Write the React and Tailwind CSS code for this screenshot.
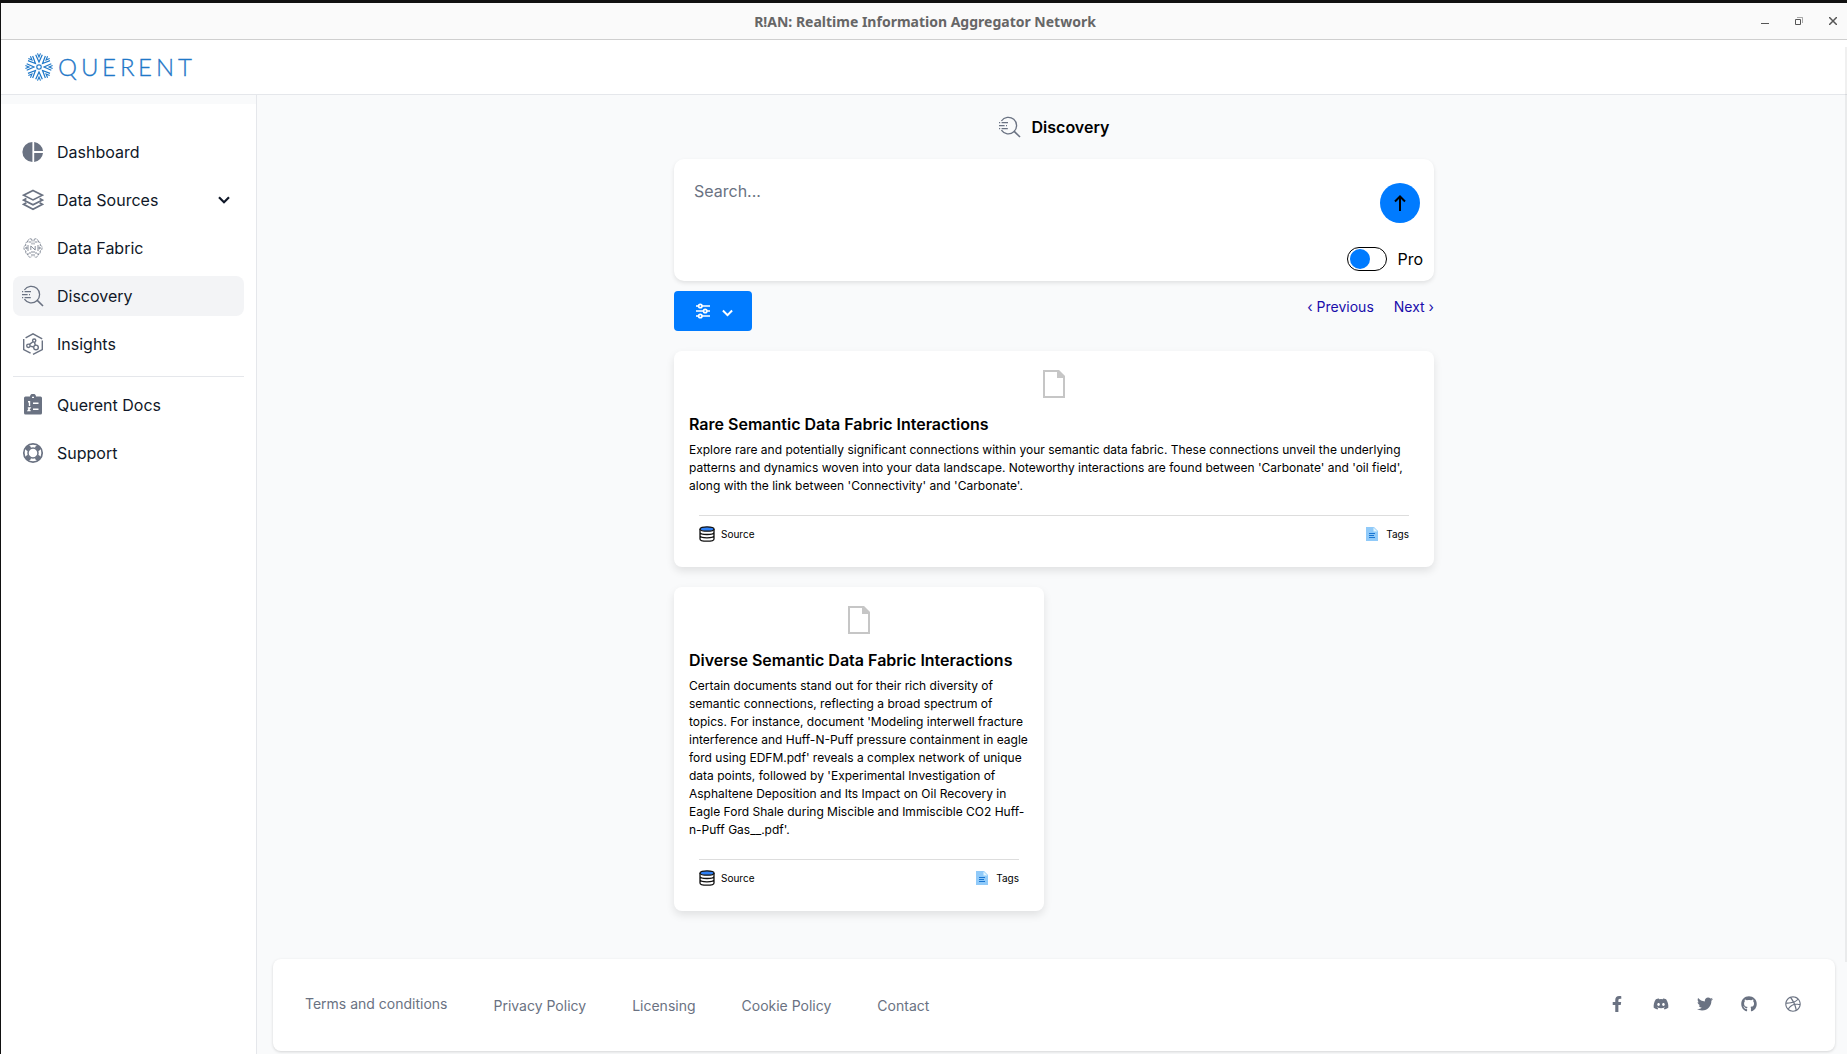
import React from "react";
import { FaFacebookF, FaDiscord, FaTwitter, FaGithub, FaDribbble } from "react-icons/fa";

function DiscoveryIcon() {
  return (
    <svg viewBox="0 0 22 22" className="size-[22px] shrink-0 text-gray-500" fill="none" stroke="currentColor" strokeWidth="1.3">
      <path d="M2.4 5A8.300 8.300 0 1 1 2.400 14.200" />
      <path d="M15 15.200 21 21" strokeWidth="1.600" />
      <path d="M0 6.600h1.200M2.600 6.600h6.400M0 9.600h5.600M7 9.600h1M0 12.600h1.200M2.600 12.600h6.200" />
    </svg>
  );
}

function DashboardIcon() {
  return (
    <svg viewBox="0 0 22 22" className="size-[22px] shrink-0 text-gray-500" fill="currentColor">
      <path d="M10.400 1a10 10 0 0 0 0 20zM12.200 1v8.900h8.800A10 10 0 0 0 12.200 1zM12.200 12v9a10 10 0 0 0 8.800-9z" />
    </svg>
  );
}

function LayersIcon() {
  return (
    <svg viewBox="0 0 22 22" className="size-[22px] shrink-0 text-gray-500" fill="none" stroke="currentColor" strokeWidth="1.700">
      <path d="M11 1.500 20.400 6.200 11 10.900 1.600 6.200z" />
      <path d="M4.400 9.400 1.600 11 11 15.700 20.400 11l-2.800-1.600" />
      <path d="M4.400 13.700 1.600 15.300 11 20.200l9.400-4.900-2.800-1.600" />
    </svg>
  );
}

function FabricIcon() {
  return (
    <svg viewBox="0 0 22 22" className="size-[22px] shrink-0 text-gray-500" fill="none" stroke="currentColor" strokeWidth="0.800">
      <path strokeDasharray="2.500 .8" d="M10 2.500a2.400 2.400 0 0 0-4 1v2.200M6 4.500a2.500 2.500 0 0 0-2 3.800M4 8a2.600 2.600 0 0 0-2 3.100A2.600 2.600 0 0 0 4 14M4 14a2.500 2.500 0 0 0 2 3.600M6 16v2.400a2.300 2.300 0 0 0 4 1M12 2.500a2.400 2.400 0 0 1 4 1v2.200M16 4.500a2.500 2.500 0 0 1 2 3.800M18 8a2.600 2.600 0 0 1 2 3.100 2.600 2.600 0 0 1-2 2.900M18 14a2.500 2.500 0 0 1-2 3.600M16 16v2.400a2.300 2.300 0 0 1-4 1" />
      <path d="M10 2.500v5M12 2.500v5M10 14v5.400M12 14v5.400M8 4v3M14 4v3M8 15v3M14 15v3" strokeDasharray="2 1" />
      <path d="M8.800 13V9l4.400 4V9M6 8v6M16 8v6" />
      <circle cx="4.400" cy="11" r=".8" /><circle cx="17.600" cy="11" r=".8" />
    </svg>
  );
}

function InsightsIcon() {
  return (
    <svg viewBox="0 0 22 22" className="size-[22px] shrink-0 text-gray-500" fill="none" stroke="currentColor" strokeWidth="1.400">
      <path d="M3.600 4.900 11 .8l9.200 5M20.300 7.600v9L11 21.400M8.600 20.200 1.700 16.600V6" />
      <circle cx="12.200" cy="7.600" r="1.600" /><circle cx="6.400" cy="12.800" r="1.700" /><circle cx="14" cy="14.400" r="2.300" />
      <path d="M11 8.700 7.500 11.400M12.500 9.300l.8 3M8.200 13.100l3.400.9" />
    </svg>
  );
}

function DocsIcon() {
  return (
    <svg viewBox="0 0 22 22" className="size-[22px] shrink-0" fill="none">
      <path className="fill-gray-500" d="M3.500 2.500H8a3 2.700 0 0 1 6 0h4.500A1.500 1.500 0 0 1 20 4v15a1.500 1.500 0 0 1-1.500 1.500h-15A1.500 1.500 0 0 1 2 19V4A1.500 1.500 0 0 1 3.500 2.500z" />
      <path stroke="#fff" strokeWidth="1.400" d="M6 7.700h1.500V12M5.800 14h2.200l-1.800 2.600h2.400M11 9.200h5.500M11 15.200h5.500M10 3.400h2" />
    </svg>
  );
}

function SupportIcon() {
  return (
    <svg viewBox="0 0 22 22" className="size-[22px] shrink-0 text-gray-500" fill="none" stroke="currentColor">
      <circle cx="11" cy="11" r="9.200" strokeWidth="1.700" />
      <circle cx="11" cy="11" r="5" strokeWidth="1.500" />
      <path strokeWidth="5.500" d="M4.600 4.600 7.300 7.300M17.400 4.600l-2.700 2.700M4.600 17.400l2.700-2.700M17.400 17.400l-2.700-2.700" />
    </svg>
  );
}

function Chevron({ className }) {
  return (
    <svg viewBox="0 0 12 8" className={className} fill="none" stroke="currentColor" strokeWidth="2.200">
      <path d="M1 1.300 6 6.300 11 1.300" />
    </svg>
  );
}

function Logo() {
  return (
    <a href="#home" aria-label="Querent" className="flex items-center gap-[5px] text-[#1f78c8]">
      <svg viewBox="-14 -14 28 28" className="size-7" fill="none" stroke="currentColor">
        <circle r="2.200" strokeWidth="1.200" />
        {[0, 45, 90, 135, 180, 225, 270, 315].map((a) => (
          <g key={a} transform={`rotate(${a})`}>
            <path strokeWidth="1.200" d="M-3.300-12.300 0-5 3.300-12.300" />
            <path strokeWidth="1.100" d="M-1.500-13.600 0-10 1.500-13.600" />
          </g>
        ))}
      </svg>
      <svg viewBox="0 0 144 40" className="h-10 w-36" fill="currentColor">
        <text x="0" y="29" fontFamily="Lato" fontWeight="300" fontSize="24" stroke="currentColor" strokeWidth="0.300">
          <tspan x="0">Q</tspan><tspan x="23">U</tspan><tspan x="44">E</tspan><tspan x="62">R</tspan><tspan x="80">E</tspan><tspan x="98">N</tspan><tspan x="120">T</tspan>
        </text>
      </svg>
    </a>
  );
}

function TitleBar() {
  return (
    <div className="flex h-[37px] items-center border-b border-[#cfcfcf] bg-[#fafafa] pr-[10px] pl-3">
      <div className="flex-1" />
      <p className="pt-0.5 font-['Noto_Sans'] text-sm font-bold text-[#666]">R!AN: Realtime Information Aggregator Network</p>
      <div className="flex flex-1 items-center justify-end gap-[26px] text-[#555]">
        <button aria-label="Minimize">
          <svg viewBox="0 0 8 8" className="size-2" stroke="currentColor"><path d="M0 6.500h8" /></svg>
        </button>
        <button aria-label="Restore">
          <svg viewBox="0 0 8 8" className="size-2" fill="none" stroke="currentColor"><path d="M.5 2.500h5v5h-5z" /><path d="M2 .5h5.500V6" opacity=".5" /></svg>
        </button>
        <button aria-label="Close">
          <svg viewBox="0 0 8 8" className="size-2" stroke="currentColor" strokeWidth="1.500"><path d="M0 0l8 8M8 0 0 8" /></svg>
        </button>
      </div>
    </div>
  );
}

function NavItem({ icon, label, active, children }) {
  return (
    <li>
      <a href={"#" + label} className={"flex h-10 items-center gap-[13px] rounded-lg pr-[14px] pl-[9px] text-gray-900 " + (active ? "bg-gray-100" : "")}>
        {icon}
        <span className="flex-1">{label}</span>
        {children}
      </a>
    </li>
  );
}

function Sidebar() {
  return (
    <aside className="w-64 shrink-0 border-r border-gray-200 pt-[9px]">
      <nav className="h-full bg-white px-3 pt-7">
        <ul className="space-y-2">
          <NavItem icon={<DashboardIcon />} label="Dashboard" />
          <NavItem icon={<LayersIcon />} label="Data Sources"><Chevron className="h-2 w-3" /></NavItem>
          <NavItem icon={<FabricIcon />} label="Data Fabric" />
          <NavItem icon={<DiscoveryIcon />} label="Discovery" active />
          <NavItem icon={<InsightsIcon />} label="Insights" />
        </ul>
        <ul className="mt-3 space-y-2 border-t border-gray-200 pt-2">
          <NavItem icon={<DocsIcon />} label="Querent Docs" />
          <NavItem icon={<SupportIcon />} label="Support" />
        </ul>
      </nav>
    </aside>
  );
}

function SearchBox() {
  return (
    <form className="flex h-[122px] rounded-[10px] bg-white shadow-[0_2px_4px_rgba(0,0,0,0.1)]">
      <textarea aria-label="Search" placeholder="Search..." className="flex-1 resize-none py-5 pl-5 outline-none placeholder:text-gray-500" />
      <div className="flex flex-col items-end justify-between pt-6 pr-[11px] pb-[10px]">
        <button type="button" aria-label="Send" className="mr-[3px] flex size-10 items-center justify-center rounded-full bg-[#007bff] text-black">
          <svg viewBox="0 0 12 16" className="h-4 w-3" fill="none" stroke="currentColor" strokeWidth="2"><path d="M6 16V2M1 6.500l5-5 5 5" /></svg>
        </button>
        <label className="flex items-center gap-[10px]">
          <input type="checkbox" role="switch" className="h-6 w-10 appearance-none rounded-full border border-black bg-white before:m-px before:ml-[2px] before:block before:size-5 before:rounded-full before:bg-[#007bff]" />
          Pro
        </label>
      </div>
    </form>
  );
}

function SourceIcon() {
  return (
    <svg viewBox="0 0 16 16" className="size-4" fill="none" stroke="#111" strokeWidth="1.300">
      <path d="M1 3v10c0 1.200 3 2.200 7 2.200s7-1 7-2.200V3M1 6.300c0 1.200 3 2.200 7 2.200s7-1 7-2.200M1 9.600c0 1.200 3 2.200 7 2.200s7-1 7-2.200" />
      <ellipse cx="8" cy="3" rx="7" ry="2.200" fill="#2f80f5" />
    </svg>
  );
}

function TagsIcon() {
  return (
    <svg viewBox="0 0 12 14" className="h-[14px] w-3">
      <path fill="#90caf9" d="M0 0h8l4 4v10H0z" />
      <path fill="#e1f5fe" d="M7.500.5v4h4z" />
      <path stroke="#1976d2" d="M3 6.500h6M3 8.500h5M3 10.500h6" />
    </svg>
  );
}

function InsightCard({ title, text, className }) {
  return (
    <article className={"rounded-lg bg-white px-[15px] pt-[19px] pb-[25px] shadow-[0_4px_8px_rgba(0,0,0,0.1)] " + className}>
      <svg viewBox="0 0 22 28" className="mx-auto h-7 w-[22px]" fill="none">
        <path stroke="#c6c6c6" strokeWidth="2" d="M1 1h14l6 6v20H1z" />
        <path fill="#c6c6c6" d="M14 0h2l6 6v2h-8z" />
      </svg>
      <h2 className="mt-[14px] font-semibold">{title}</h2>
      <p className="mt-[5px] text-xs/[18px]">{text}</p>
      <div className="mx-[10px] mt-5 flex items-center justify-between border-t border-[#ddd] pt-[10px] text-[10px]/4">
        <button className="flex items-center gap-[6px]"><SourceIcon />Source</button>
        <button className="flex items-center gap-2"><TagsIcon />Tags</button>
      </div>
    </article>
  );
}

function Footer() {
  return (
    <footer className="mt-12 mr-3 mb-[3px] ml-4 flex items-center justify-between rounded-lg bg-white pt-[35px] pr-[34px] pb-[33px] pl-8 text-sm text-gray-500 shadow-[0_1px_3px_rgba(0,0,0,0.15)]">
      <ul className="flex h-6 items-center gap-[46px]">
        <li className="pb-1"><a href="#terms">Terms and conditions</a></li>
        <li><a href="#privacy">Privacy Policy</a></li>
        <li><a href="#licensing">Licensing</a></li>
        <li><a href="#cookies">Cookie Policy</a></li>
        <li><a href="#contact">Contact</a></li>
      </ul>
      <div className="flex items-center gap-7 pb-1">
        <a href="#facebook" aria-label="Facebook"><FaFacebookF className="size-4" /></a>
        <a href="#discord" aria-label="Discord"><FaDiscord className="size-4" /></a>
        <a href="#twitter" aria-label="Twitter"><FaTwitter className="size-4" /></a>
        <a href="#github" aria-label="GitHub"><FaGithub className="size-4" /></a>
        <a href="#dribbble" aria-label="Dribbble"><FaDribbble className="size-4" /></a>
      </div>
    </footer>
  );
}

export default function App() {
  return (
    <div className="relative flex min-h-screen flex-col border-t-[3px] border-l border-[#111] bg-gray-50 font-['Inter',sans-serif] text-base text-black">
      <TitleBar />
      <header className="flex h-[55px] items-center border-b border-gray-200 bg-white pl-6">
        <Logo />
      </header>
      <div className="flex flex-1">
        <Sidebar />
        <div className="flex min-w-0 flex-1 flex-col">
          <main className="w-full flex-1 pl-1">
            <div className="mx-auto max-w-[760px]">
              <h1 className="flex items-center justify-center gap-[11px] pt-5 font-semibold">
                <DiscoveryIcon />
                Discovery
              </h1>
              <div className="mt-5"><SearchBox /></div>
              <div className="mt-[10px] flex items-start justify-between">
                <button aria-label="Filters" className="flex h-10 w-[78px] items-center justify-center gap-3 rounded bg-[#007bff] pl-[3px] text-white">
                  <svg viewBox="0 0 14 16" className="h-4 w-[14px]" fill="none" stroke="currentColor" strokeWidth="1.700">
                    <path d="M0 3h2.500M6 3h8M0 8h7.500M11 8h3M0 13h2.500M6 13h8" />
                    <circle cx="4.300" cy="3" r="1.700" /><circle cx="9.200" cy="8" r="1.700" /><circle cx="4.300" cy="13" r="1.700" />
                  </svg>
                  <Chevron className="mt-1 h-2 w-[11px]" />
                </button>
                <nav className="flex gap-5 pt-[6px] text-sm text-[#1a0dab]">
                  <a href="#previous">‹ Previous</a>
                  <a href="#next">Next ›</a>
                </nav>
              </div>
              <section className="mt-5 grid grid-cols-2 gap-5">
                <InsightCard
                  className="col-span-2"
                  title="Rare Semantic Data Fabric Interactions"
                  text="Explore rare and potentially significant connections within your semantic data fabric. These connections unveil the underlying patterns and dynamics woven into your data landscape. Noteworthy interactions are found between 'Carbonate' and 'oil field', along with the link between 'Connectivity' and 'Carbonate'."
                />
                <InsightCard
                  className=""
                  title="Diverse Semantic Data Fabric Interactions"
                  text="Certain documents stand out for their rich diversity of semantic connections, reflecting a broad spectrum of topics. For instance, document 'Modeling interwell fracture interference and Huff-N-Puff pressure containment in eagle ford using EDFM.pdf' reveals a complex network of unique data points, followed by 'Experimental Investigation of Asphaltene Deposition and Its Impact on Oil Recovery in Eagle Ford Shale during Miscible and Immiscible CO2 Huff-n-Puff Gas__.pdf'."
                />
              </section>
            </div>
          </main>
          <Footer />
        </div>
      </div>
      <div className="absolute top-11 right-0 bottom-[92px] w-0.5 bg-black/6" />
    </div>
  );
}
